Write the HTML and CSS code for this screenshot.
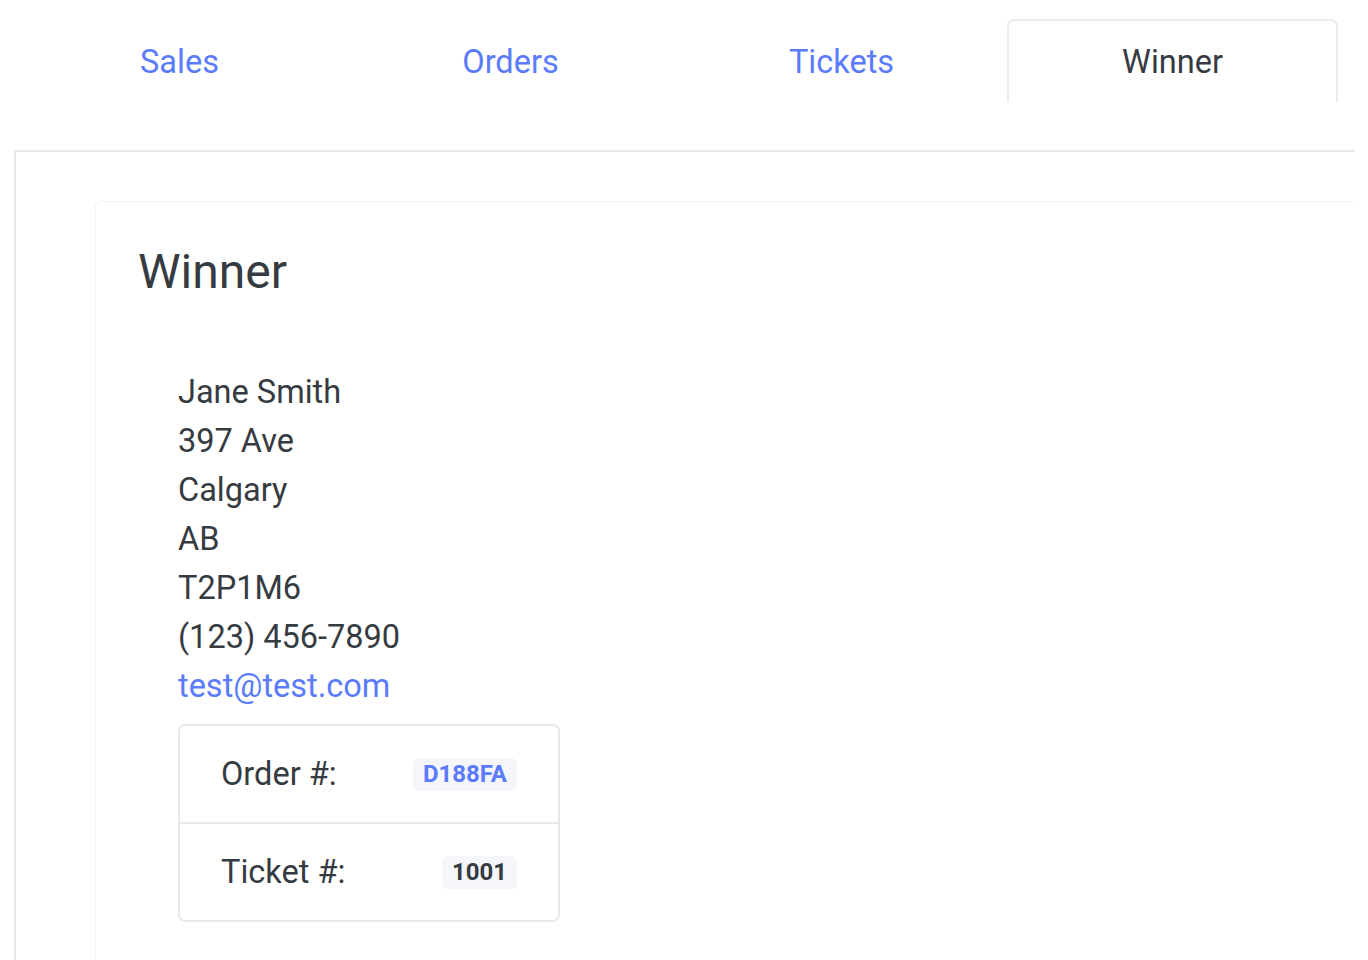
FILE: index.html
```html
<!DOCTYPE html>
<html>
<head>
<meta charset="utf-8">
<link rel="stylesheet" href="styles.css">
</head>
<body>
<div class="page">
  <nav class="tabs">
    <a class="tab">Sales</a>
    <a class="tab">Orders</a>
    <a class="tab">Tickets</a>
    <a class="tab active">Winner</a>
  </nav>
  <section class="panel">
    <div class="card">
      <h1 class="title">Winner</h1>
      <div class="winner">
        <div class="line">Jane Smith</div>
        <div class="line">397 Ave</div>
        <div class="line">Calgary</div>
        <div class="line">AB</div>
        <div class="line">T2P1M6</div>
        <div class="line">(123) 456-7890</div>
        <div class="line"><a class="link">test@test.com</a></div>
        <ul class="list">
          <li class="item"><span class="label">Order #:</span><span class="badge blue">D188FA</span></li>
          <li class="item"><span class="label">Ticket #:</span><span class="badge">1001</span></li>
        </ul>
      </div>
    </div>
  </section>
</div>
</body>
</html>
```
FILE: styles.css
```css
html, body {
  margin: 0;
  padding: 0;
  background: #ffffff;
}
body {
  font-family: Roboto, "Liberation Sans", sans-serif;
  color: #363b42;
  overflow: hidden;
}
.page {
  width: 1355px;
  height: 960px;
  overflow: hidden;
}
.tabs {
  display: flex;
  padding: 19px 0 0 14px;
  height: 83px;
}
.tab {
  box-sizing: border-box;
  width: 331px;
  height: 83px;
  display: flex;
  align-items: center;
  justify-content: center;
  font-size: 32.5px;
  color: #5b7bfd;
  border: 2px solid transparent;
  border-bottom: none;
  border-radius: 7px 7px 0 0;
}
.tab.active {
  color: #363b42;
  border-color: #ebebeb;
}
.panel {
  margin: 48px 0 0 14px;
  width: 1500px;
  height: 900px;
  border-top: 2px solid #e8e9ed;
  border-left: 2px solid #e8e9ed;
  padding: 49px 0 0 79px;
}
.card {
  width: 1400px;
  height: 900px;
  border: 1px solid #f3f3f4;
  border-radius: 6px;
  padding: 40px 0 0 42px;
  box-sizing: border-box;
}
.title {
  margin: 0;
  font-size: 48px;
  font-weight: 400;
  line-height: 60px;
  color: #363b42;
}
.winner {
  margin: 66px 0 0 40px;
  font-size: 32.5px;
  line-height: 49px;
}
.link {
  color: #5b7bfd;
}
.list {
  list-style: none;
  margin: 13px 0 0;
  padding: 0;
  width: 382px;
  box-sizing: border-box;
  border: 2px solid #e9e9ea;
  border-radius: 7px;
}
.item {
  display: flex;
  align-items: center;
  justify-content: space-between;
  height: 96px;
  padding: 0 41px 0 41px;
}
.item + .item {
  border-top: 2px solid #e9e9ea;
}
.label {
  font-size: 32.5px;
}
.badge {
  font-size: 24px;
  font-weight: 700;
  line-height: 33px;
  padding: 0 10px;
  background: #f4f6f9;
  border-radius: 6px;
  color: #363b42;
}
.badge.blue {
  color: #5b7bfd;
}
```
